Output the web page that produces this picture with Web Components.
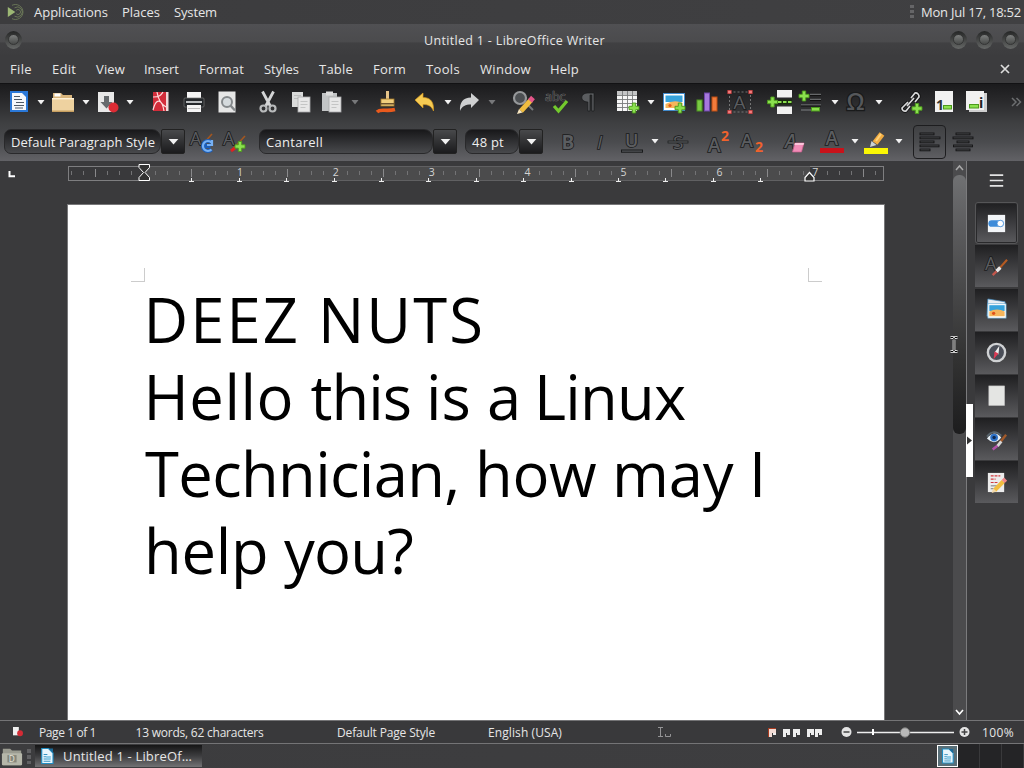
<!DOCTYPE html>
<html lang="en"><head><meta charset="utf-8"><title>Untitled 1 - LibreOffice Writer</title>
<style>
html,body{margin:0;height:100%;overflow:hidden;background:#3a3a3c}
body{font-family:"Open Sans","Noto Sans",sans-serif;color:#e6e6e6;font-size:13px}
</style></head><body>
<writer-desktop></writer-desktop>
<script>
const ln=(d,c,w=1,x='')=>`<path d="${d}" fill="none" stroke="${c}" stroke-width="${w}" ${x}/>`;
const fl=(d,c,x='')=>`<path d="${d}" fill="${c}" ${x}/>`;
const rc=(x,y,w,h,c,e='')=>`<rect x="${x}" y="${y}" width="${w}" height="${h}" fill="${c}" ${e}/>`;
const ci=(x,y,r,c,e='')=>`<circle cx="${x}" cy="${y}" r="${r}" fill="${c}" ${e}/>`;
const plus=(x,y)=>fl(`M${x-1.7} ${y-5}h3.4v3.3h3.3v3.4h-3.3v3.3h-3.4v-3.3h-3.3v-3.4h3.3z`,'#8be04e','stroke="#4c9a1c" stroke-width=".9"');
const tx=(x,y,s,t,c='#3c3d3f',e='')=>`<text x="${x}" y="${y}" font-size="${s}" fill="${c}" ${e}>${t}</text>`;
const OUT='stroke="#77797b" stroke-width=".7" paint-order="stroke"';
const OUTD='stroke="#191a1b" stroke-width="1.6" paint-order="stroke"';
const glyph=(x,y,s,t,e='')=>tx(x,y,s,t,'#5b5d60',OUTD+' '+e);
const ICONS={
 newdoc:rc(3,1,18,21,'#2a78d8')+rc(5,3,14,17,'#f4f7fb')+ln('M7 6.5h6M7 9.5h8M9 12.5h8M7 15.5h10M8 18h8','#4c5866',1.1)+fl('M15 3h4v4z','#2a78d8'),
 folder:fl('M2 3h8l2 2h9v5H2z','#d9b57c')+rc(3.5,3.5,6,3,'#fff')+rc(1,8,22,14,'#eed2a0','rx="1"')+rc(1,8,22,1.4,'#fff1d6')+rc(1,20.5,22,1.5,'#c79f60'),
 save:rc(2,2,16,20,'#e8e8e8')+fl('M8 6h5v6h3.500l-6 6.500-6-6.500H8z','#666a6d')+ci(17.5,17.5,5,'#dc2b34'),
 pdf:rc(4,2,15,19,'#d32d3a')+rc(17,2,2.500,19,'#f0d8d8')+ln('M4 7c7 0 8-2 10-5M4 20c3-12 9-12 11 1M8 2c1 7 4 12 9 15','#ffdede',1.200),
 print:rc(5,2,14,7,'#f5f5f5')+rc(2,8,20,9,'#24272a','rx="1" stroke="#777" stroke-width=".7"')+rc(4,11,16,2,'#b9bcbe')+rc(5,15,14,7,'#f4f4f4')+rc(6,18,12,1,'#bbb'),
 preview:rc(3.500,1.500,17,21,'#e6e6e6')+ci(12,12,5,'#d5dadd','stroke="#85898c" stroke-width="2"')+ln('M15.500 15.500l4.500 5','#85898c',2.500),
 cut:ln('M6.500 1.500l8 15M17.500 1.500l-8 15','#d4d5d6',2.800)+ci(7.500,18.500,3,'none','stroke="#b9bbbc" stroke-width="2.200"')+ci(16.500,18.500,3,'none','stroke="#b9bbbc" stroke-width="2.200"'),
 copy:rc(3,2,11,15,'#d9dada')+ln('M5 5.500h7M5 8.500h5','#bcbdbd')+rc(9,7,12,15,'#e7e7e7','stroke="#aaabac" stroke-width=".8"')+ln('M11.500 11.500h7M11.500 14.500h7M11.500 17.500h5','#c4c5c5'),
 paste:rc(2,3,15,18,'#c2c4c5')+rc(6,1.500,7,4,'#ddd')+rc(9,7,12,15,'#e7e7e7','stroke="#aaabac" stroke-width=".8"')+ln('M11.500 11.500h7M11.500 14.500h7M11.500 17.500h5','#c4c5c5'),
 brush:rc(11,1,3,9,'#e6c489')+rc(6,9,13,7,'#f1cf7d','stroke="#a87b28" stroke-width=".8"')+rc(6,13,13,1.500,'#6b522c')+ln('M2 22c4-4 8 0 18-2.500','#e95a1d',3.600),
 undo:fl('M2 10l8-7v4.500c8 0 11 5 10.500 13.500-2-5-5-6.500-10.500-6.500V18z','#f6cb53','stroke="#d69a20" stroke-width=".7"'),
 redo:fl('M22 10l-8-7v4.500c-8 0-11.500 5-11 13.500 2-5 5.500-6.500 11-6.500V18z','#cfd0d1'),
 find:ci(8,8,6,'#4c4f52','stroke="#96989a" stroke-width="2.200"')+ln('M14 13l7 7','#77797b',2)+ln('M9 21l10-11','#f1bd3f',5)+ln('M18 11l3-3.500','#e6568a',5)+fl('M5 24l2-5 3.500 3.500z','#f7e5c0'),
 abc:tx(0,11,12.5,'abc','#333',OUT)+ln('M9 16l4.500 5L22 11','#73c92d',3.200),
 pilcrow:fl('M17 3v18h-2.200V5h-1.800v16h-2.200v-9c-8 0-8-9 0-9z','#5b5d60','stroke="#191a1b" stroke-width=".7"'),
 table:rc(1,1,20,20,'#f7f7f7')+rc(1,1,20,4,'#c4c5c6')+ln('M6.500 1v20M11.500 1v20M16.500 1v20M1 5.500h20M1 9.500h20M1 13.500h20M1 17.500h20','#77797b',.9)+plus(18,18),
 image:rc(1.500,3.500,21,17,'#fff','stroke="#428acb"')+rc(3.500,5.500,17,6.500,'#36a3dc')+fl('M3.500 14q9-5 17-1v5h-17z','#f5b65c')+ci(8,15.500,1.600,'#e45a1b')+plus(18,18),
 chart:rc(2,10,5,11,'#79c943','stroke="#4f9522"')+rc(9.500,3,5,18,'#a678dc','stroke="#6e46a8"')+rc(17,7,5,14,'#f27c3c','stroke="#c04e12"'),
 textbox:glyph(5.500,19,19,'A')+rc(1.500,2,21,20,'none','stroke="#888" stroke-width=".8" stroke-dasharray="2 2"')+[1.500,22.500].map(x=>[2,22].map(y=>rc(x-1.700,y-1.700,3.400,3.400,'#f08080','stroke="#c33" stroke-width=".6"')).join('')).join(''),
 pagebreak:rc(8,0,15,7.500,'#f1f1f1')+rc(8,16.500,15,7.500,'#f1f1f1')+rc(6,9.500,17,5,'#1a2a10')+ln('M9 12h14','#8be04e',2,'stroke-dasharray="3.500 1.500"')+plus(3.500,12),
 field:plus(4,6)+ln('M10 4.500h11M10 9.500h11M1 15h20M1 20h10','#66686a',1.300)+ln('M10 5.500h11M10 10.500h11M1 16h20','#111',1)+rc(11.500,17.500,8,3.500,'#8be04e','stroke="#4c9a1c"'),
 omega:tx(2.500,20,23,'Ω','#55575a','stroke="#191a1b" stroke-width="2.4" paint-order="stroke" font-weight="600"'),
 link:ln('M9 12l-6 6a3 3 0 0 0 4 3l4-5M12 8l4-5a3.500 3.500 0 0 1 4 4l-4 5M8 16l7-8','#111',3.200)+ln('M9 12l-6 6a3 3 0 0 0 4 3l4-5M12 8l4-5a3.500 3.500 0 0 1 4 4l-4 5M8 16l7-8','#d9dadb',1.700)+plus(18,18.500),
 footnote:rc(3,1,18,21,'#f1f1f1')+tx(4,20,14,'1','#333','font-weight="bold"')+rc(11.500,15.500,8,3.500,'#8be04e','stroke="#4c9a1c"'),
 endnote:rc(5,3,18,19,'#cfcfcf')+rc(2,1,18,19,'#f1f1f1')+tx(15,18,14,'i','#222','font-weight="bold"')+rc(5.500,14.500,9,3.500,'#8be04e','stroke="#4c9a1c"'),
 more:ln('M8 8l4 4-4 4M12.500 8l4 4-4 4','#6c6e70',1.500),
 updstyle:glyph(-1,15,18,'A')+ln('M13 13l8-9','#a4571f',1.600)+ln('M20.500 12.500a5 5 0 1 0 0 7M13.500 16h6','#1d5eb8',4)+ln('M20.500 12.500a5 5 0 1 0 0 7M21 10v5h-5','#76b1f5',2.200),
 newstyle:glyph(-1,15,18,'A')+ln('M8 20l13-14','#a4571f',1.600)+ln('M7 21l4-3','#d22',3)+plus(16,16.500),
 bold:glyph(5.500,19,19,'B','font-weight="bold"'), italic:glyph(9,19,19,'I','font-style="italic"'),
 underline:glyph(5,17,18,'U','font-weight="600"')+rc(1.500,20,21,2.200,'#55575a','stroke="#191a1b"'),
 strike:glyph(7,19,19,'S')+rc(2,11,20,2,'#55575a','stroke="#191a1b" stroke-width=".7"'),
 sup:glyph(2,22,19,'A','font-weight="600"')+tx(15,11,14,'2','#f0622c','font-weight="bold"'),
 sub:glyph(1,17,18,'A','font-weight="600"')+tx(15,22,14,'2','#f0622c','font-weight="bold"'),
 clear:glyph(3,18,19,'A','font-style="italic" font-weight="600"')+fl('M13 13h9l-2.500 9h-9z','#f18db8','stroke="#cc5f8e" stroke-width=".7"')+fl('M13 13h9l-.5 2h-9z','#fbc5da'),
 color:glyph(5.500,15,19,'A','font-weight="600"')+rc(0,18,24,5,'#c9121a'),
 hilite:ln('M11 13l7-9','#f2ad42',6)+ln('M12 11l5-7','#ffd27a',2)+fl('M6 17l1.500-6 5 4z','#cbd2d4')+rc(0,18,24,6,'#fbf704'),
 left:[3,7,11,15,19].map((y,i)=>rc(2,y,[14,20,14,19,10][i],1.800,'#4a4b4d','stroke="#131314" stroke-width=".9"')).join(''),
 center:[3,7,11,15,19].map((y,i)=>{let w=[14,20,12,19,14][i];return rc(12-w/2,y,w,1.800,'#4a4b4d','stroke="#131314" stroke-width=".9"')}).join(''),
 menu:ln('M5 6.500h14M5 12h14M5 17.500h14','#e4e4e4',1.800),
 props:rc(3,3,18,18,'#f2f5f8')+rc(3.500,8.500,16,7,'#3d8bd9','rx="3.500"')+ci(16,12,3.400,'#fff','stroke="#3d8bd9" stroke-width=".8"'),
 styles:glyph(0,16,19,'A')+ln('M15 14l8-9','#b55a22',2.200)+ln('M12 17l4-4','#e9e9e9',3.500)+ln('M8 21l4-4','#c2574d',2.500),
 gallery:fl('M3 1l18 3-1 15H2z','#e8eef3','stroke="#3d8bc4" stroke-width=".7"')+rc(3,6,19,15,'#fff','stroke="#69a9cf" stroke-width=".7"')+rc(4.500,7.500,16,6,'#36a3dc')+fl('M4.500 14q8-4 16 0v5h-16z','#f5b65c')+ci(9,16,1.700,'#e1511b'),
 nav:ci(12,12,9,'#4a4e58','stroke="#cfd1d3" stroke-width="2.500"')+fl('M15 5l-1 9-4-2z','#eee')+fl('M9 19l1-8 4 2z','#df3a55'),
 page:rc(4,2,16.500,20.500,'#e4e5e3','stroke="#b9b9b9" stroke-width=".6"'),
 inspect:fl('M2 11q8-10 15-1-7 9-15 1z','#e6eef4')+ln('M2 9q7-9 15-1','#59656d',1.800)+ci(9.500,10,4,'#2d72c8')+ci(9.500,10,1.800,'#102a50')+ln('M15 16l7-9','#a35a2a',2.500)+ln('M13 19l4-5','#d7d7d7',3)+ln('M8 22.500l5-4','#b052a8',2.700),
 changes:rc(3,2,17,20,'#ececec')+ln('M6 5h10M6 8.500h5M6 12h8','#d2393d',1.300,'stroke-dasharray="3 1"')+ln('M6 15.500h8M6 18.500h5','#777',1)+ln('M10 20l9-9','#f1bd3f',4.500)+ln('M19 11l2.500-2.500','#f18787',4.500)+fl('M7 23l1.500-5 3.500 3.500z','#f3d9a8'),
 modified:rc(6,6,7,10,'#eee')+ci(14.500,13.500,3.500,'#d32b35'),
 files:fl('M2 4h8l2 2h10v16H2z','#9a9b90')+rc(1,9,22,13,'#b5b6a9','rx="1"')+rc(7,11,10,8,'#85867b')+tx(8.500,19,9,'D','#e5e6dc'),
 writer:fl('M5 2h9l6 6v14H5z','#eaf6fc','stroke="#218fc4" stroke-width="1.500"')+fl('M14 2h6v6z','#1b6a98')+ln('M7.500 10h5M7.500 13h9M7.500 16h9M7.500 19h9','#2288bb',1.200)+rc(11,12,6,5,'#8fcbe6'),
 mate:fl('M1 6l9 6-9 6z','#9cb774')+ln('M6 4a9 9 0 1 1 0 16M9 7a6 6 0 1 1 0 10M11 10a3 3 0 1 1 0 4','#717f5b',1)
};
const put=(tag,css,html,after)=>customElements.define(tag,class extends HTMLElement{
 connectedCallback(){if(this.shadowRoot)return;const r=this.attachShadow({mode:'open'});
  const t=document.createElement('template');
  t.innerHTML=`<style>*{box-sizing:border-box}${css}</style>`+(typeof html==='function'?html(this):html);
  r.append(t.content.cloneNode(true));after&&after(this,r);}
});
// A run of text tracked to an exact width.
put('fit-text',':host{display:block;flex:none;white-space:pre}span{display:inline-block}','<span><slot></slot></span>',(h,r)=>{
 const w=+h.getAttribute('w'),s=r.querySelector('span'),t=h.textContent;h.style.width=w+'px';
 s.style.letterSpacing=((w-s.getBoundingClientRect().width)/t.length)+'px';});
put('ui-icon',':host{display:block;flex:none;width:24px;height:24px}svg{display:block;width:100%;height:100%;overflow:visible}',
 h=>`<svg viewBox="0 0 24 24">${ICONS[h.getAttribute('name')]}</svg>`);
put('drop-arrow',':host{display:block;flex:none;width:8px;height:5px;color:#f2f2f2}:host([dim]){color:#77787a}:host([big]){width:11px;height:6px}svg{display:block;width:100%;height:100%}',
 '<svg viewBox="0 0 8 5" preserveAspectRatio="none"><path d="M.5 0h7L4 4.500z" fill="currentColor"/></svg>');
put('title-orb',':host{display:block;flex:none;width:17px;height:18px;border-radius:50%;background:linear-gradient(#242525,#666867);padding:3px}i{display:block;width:11px;height:11px;border-radius:50%;background:linear-gradient(#7c7e7d,#484a49);border:1px solid #343535}','<i></i>');
put('combo-box',`:host{display:flex;flex:none;height:25px;align-items:stretch}
 .e{flex:1;background:linear-gradient(#18181a,#48494c);border-radius:7px 9px 9px 7px;border:1px solid #29292b;padding-left:6px;display:flex;align-items:center;font-size:13px;min-width:0;color:#eee}
 .b{width:24px;background:linear-gradient(#48494b,#1b1b1d);border:1px solid #222;border-radius:2px;display:flex;align-items:center;justify-content:center}`,
 '<div class="e"><slot></slot></div><div class="b"><drop-arrow big></drop-arrow></div>');
// Row of tools; each entry is [centre, kind, name] and becomes a flex item with a leading margin.
const row=(items)=>{let p=0;return items.map(([c,k,n,w,t,tw])=>{const W=k==='i'?24:k==='a'||k==='d'?8:k==='s'?33:w,x=k==='c'?c:c-W/2,m=x-p;p=x+W;const s=`style="margin-left:${m}px${k==='c'?`;width:${w}px`:''}"`;
 return k==='i'?`<ui-icon name="${n}" ${s}></ui-icon>`:k==='a'?`<drop-arrow ${s}></drop-arrow>`:k==='d'?`<drop-arrow dim ${s}></drop-arrow>`:k==='s'?`<span class="sel" ${s}><ui-icon name="${n}"></ui-icon></span>`:`<combo-box ${s}><fit-text w="${tw}">${t}</fit-text></combo-box>`}).join('')};
put('tool-bars',`:host{display:block;flex:none;height:78px;background:linear-gradient(#1b1b1d,#28282a 20%,#3e3f41 50%,#4a4b4e 75%,#626266);border-top:1px solid #121214}
 .r{height:36px;display:flex;align-items:center}.r+.r{height:40px;padding-top:3px}.sel{display:flex;flex:none;width:33px;height:34px;border:1px solid #1d1d1f;border-radius:4px;align-items:center;justify-content:center}`,
 ()=>`<div class="r">${row([[19,'i','newdoc'],[41,'a'],[63,'i','folder'],[85.500,'a'],[108,'i','save'],[129.500,'a'],[160.500,'i','pdf'],[194,'i','print'],[227,'i','preview'],[268,'i','cut'],[301,'i','copy'],[332,'i','paste'],[354.500,'d'],[387,'i','brush'],[425,'i','undo'],[447.500,'a'],[469,'i','redo'],[491.500,'d'],[524,'i','find'],[557,'i','abc'],[589,'i','pilcrow'],[628,'i','table'],[650.500,'a'],[674,'i','image'],[707,'i','chart'],[740,'i','textbox'],[781,'i','pagebreak'],[812,'i','field'],[834.500,'a'],[856,'i','omega'],[878.500,'a'],[910.500,'i','link'],[943.500,'i','footnote'],[976,'i','endnote'],[1016,'i','more']])}</div>
 <div class="r">${row([[4,'c','',181,'Default Paragraph Style',144],[203,'i','updstyle'],[236,'i','newstyle'],[259,'c','',198,'Cantarell',57],[465,'c','',78,'48 pt',32],[568,'i','bold'],[600,'i','italic'],[632,'i','underline'],[654.500,'a'],[678,'i','strike'],[718,'i','sup'],[752,'i','sub'],[794,'i','clear'],[832,'i','color'],[854.500,'a'],[876,'i','hilite'],[898.500,'a'],[929.500,'s','left'],[963,'i','center']])}</div>`);
put('text-ruler',':host{display:block;flex:none;height:22px;width:952px}svg{display:block}',()=>{
 let s=rc(68.500,5.500,815,14,'#39393b','stroke="#7e7e80"')+rc(144,5,666,15,'#4b4b4c')+ln('M144 5.500h666M144 19.500h666','#606062');
 for(let i=-6;i<=61;i++){const x=Math.round(144+i*12)-.5;if(i===0||(i>0&&i%8===0)||x>880)continue;const h=i%4===0;s+=ln(`M${x} ${h?8:10}v${h?8:4}`,h?'#89898b':'#737375')}
 for(let n=1;n<8;n++)s+=`<text x="${144+n*95.900}" y="15" font-size="10.5" text-anchor="middle" fill="#d3d3d3">${n}</text>`;
 for(let i=1;i<14;i++){const x=Math.round(144+i*47.400)+.5;s+=ln(`M${x} 17v4M${x-2.500} 20.500h5`,'#eee')}
 s+=fl('M139 3.500h10.500v3l-4.500 5 4.500 5v3H139v-3l4.500-5-4.500-5z','#333','stroke="#fff"');
 s+=fl('M805 20v-3.500l4.500-5 4.500 5V20z','#333','stroke="#fff" stroke-width="1.200"')+ln('M9.500 10v5.200h5.500','#fff',2);
 return `<svg width="952" height="22">${s}</svg>`});
// Words of one document line: [text, advance] pairs, each advance including the space after it.
const line=(ml,...ws)=>`<div class="l" style="margin-left:${ml}px">${ws.map(([t,w])=>`<fit-text w="${w}">${t}</fit-text>`).join('')}</div>`;
put('text-page',`:host{display:block;width:818px;height:517px;margin:21px 0 0 67px;border:1px solid #777779;border-bottom:0;background:#fff;color:#000}
 .m{display:flex;justify-content:space-between;padding:63px 62px 0 63px;height:76px}.m i{width:14px;height:14px;border:solid #ccc;border-width:0 1px 1px 0}.m i+i{border-width:0 0 1px 1px}
 .t{padding-left:76px;font-size:61.500px;line-height:77.100px}.l{display:flex}`,
 `<div class="m"><i></i><i></i></div><div class="t">${line(-.5,['DEEZ ',174.5],['NUTS',167])}${line(-.5,['Hello ',167],['this ',115.5],['is ',61],['a ',47],['Linux',151.500])}${line(1,['Technician, ',330],['how ',137],['may ',137],['I',19])}${line(0,['help ',140],['you?',129])}</div>`);
put('scroll-bar',`:host{display:flex;flex-direction:column;flex:none;width:14px;background:#4b4b4d;border-right:1px solid #7b7b7d;align-items:center}
 svg{flex:none}.th{width:13px;height:259px;border-radius:6px;background:linear-gradient(#707173,#5c5c5e 20%,#333 70%,#1d1d1e)}.sp{flex:1}`,
 `<svg width="13" height="14">${ln('M3 9l3.500-4L10 9','#aaa',1.500)}</svg><div class="th"></div><div class="sp"></div><svg width="13" height="16">${ln('M3 6l3.500 4L10 6','#fff',1.600)}</svg>`);
put('side-deck',`:host{display:flex;flex-direction:column;flex:1;padding:8px 6px 0 8px;gap:1.200px;background:#3a3a3c}
 .h{height:32px;display:flex;justify-content:center;flex:none}.b{height:42px;flex:none;background:linear-gradient(#1f1f21,#5a5a5d);display:flex;align-items:center;justify-content:center}.on{border:1px solid #555557;border-radius:3px;box-shadow:inset 0 0 0 1px #29292b}ui-icon{width:23px;height:23px}`,
 `<div class="h"><ui-icon name="menu"></ui-icon></div>`+['props','styles','gallery','nav','page','inspect','changes'].map((n,i)=>`<div class="b ${i?'':'on'}"><ui-icon name="${n}"></ui-icon></div>`).join(''));
const words=(a)=>{let p=0;return a.map(([x,w,t])=>{const m=x-p;p=x+w;return `<fit-text w="${w}" style="margin-left:${m}px">${t}</fit-text>`}).join('')};
put('top-panel',':host{display:flex;flex:none;height:24px;align-items:center;background:linear-gradient(90deg,#3c3c3e,#404042);padding-right:3px}ui-icon{width:20px;height:20px;margin-left:7px;margin-right:-27px}.g{flex:1}.d{width:4px;height:14px;margin-right:7px;background:repeating-linear-gradient(#656567 0 3px,transparent 3px 5px)}',
 `<ui-icon name="mate"></ui-icon>${words([[34,74,'Applications'],[122,38,'Places'],[174,43,'System']])}<div class="g"></div><div class="d"></div><fit-text w="100">Mon Jul 17, 18:52</fit-text>`);
put('title-bar',':host{display:flex;flex:none;height:32px;align-items:center;padding:0 5px;background:linear-gradient(#505053,#4b4b4d 55%,#404042 60%,#3c3c3e)}.c{flex:1;display:flex;justify-content:center;padding-left:57px}.b{display:flex;gap:9px}fit-text{font-size:12.500px;font-weight:500}',
 '<title-orb></title-orb><div class="c"><fit-text w="181">Untitled 1 - LibreOffice Writer</fit-text></div><div class="b"><title-orb></title-orb><title-orb></title-orb><title-orb></title-orb></div>');
put('menu-bar',':host{display:flex;flex:none;height:27px;align-items:center;background:#3c3c3e;padding-bottom:2px}svg{margin-left:421px}',
 `${words([[10,22,'File'],[52,24,'Edit'],[96,29,'View'],[144,35,'Insert'],[199,45,'Format'],[264,35,'Styles'],[319,34,'Table'],[373,33,'Form'],[426,34,'Tools'],[480,51,'Window'],[550,29,'Help']])}<svg width="10" height="10">${ln('M1 1l8 8M9 1l-8 8','#ddd',1.700)}</svg>`);
put('status-bar',':host{display:flex;flex:none;height:24px;align-items:center;background:#39393b;border-top:1px solid #747476;border-bottom:1px solid #747476;font-size:12px}ui-icon{width:20px;height:20px;margin-left:8px;margin-right:-28px}svg{margin-left:94px}',
 ()=>{const pg=(x,c='#eee')=>rc(x,8,7,8,c)+rc(x+3,12,4,4,'#39393b')+rc(x+4,12,3,2,'#eee');
 return `<ui-icon name="modified"></ui-icon>${words([[39,57,'Page 1 of 1'],[135.5,128,'13 words, 62 characters'],[337,98,'Default Page Style'],[488,74,'English (USA)']])}<svg width="322" height="22">${ln('M2 6.500h5M4.500 6v9M2 15.500h5M9.500 13v2.500h5V13','#949496',1)}${rc(112,7,8,9,'#a93c20')}${pg(113,'#f3dcd5')}${pg(127)}${pg(137)}${pg(151)}${pg(159)}${ci(190.500,11,5,'#e4e4e4')}${ln('M187.500 11h6','#444',1.500)}${ln('M201 11.500h97','#eee',1.600)}${rc(216,8,2,6,'#fff')}${ci(249,11.500,4.700,'#b9b9b9','stroke="#777"')}${ci(308.500,11,5,'#e4e4e4')}${ln('M305.500 11h6M308.500 8v6','#444',1.500)}</svg><fit-text w="32" style="margin-left:4px">100%</fit-text>`});
put('task-bar',`:host{display:flex;flex:1;background:linear-gradient(90deg,#3c3c3e,#3e3e40)}.f{width:22px;height:22px;margin:1px 0 0 1px}.g{width:4px;height:15px;margin:5px 4px 0 4px;background:repeating-linear-gradient(#606062 0 4px,transparent 4px 6px)}
 .t{width:167px;height:22px;margin-top:1px;background:linear-gradient(#151516,#3d3d3f 50%,#727274);display:flex;align-items:center;padding-left:3px;gap:7px}.t ui-icon{width:18px;height:18px}.s{flex:1}
 .w{width:21px;height:22px;border:1px solid #fff;background:#596f78;margin-top:1px;padding:1px}.w ui-icon{width:17px;height:18px}.x{width:22px;background:#242426;border-right:1px solid #39393b}`,
 `<ui-icon class="f" name="files"></ui-icon><div class="g"></div><div class="t"><ui-icon name="writer"></ui-icon><fit-text w="129">Untitled 1 - LibreOf…</fit-text></div><div class="s"></div><div class="w"><ui-icon name="writer"></ui-icon></div><div class="x"></div><div class="x"></div><div class="x"></div>`);
put('writer-desktop',`:host{display:flex;flex-direction:column;position:relative;width:1024px;height:768px;overflow:hidden}
 main{height:559px;flex:none;display:flex;background:#3a3a3c;overflow:hidden}.ed{width:953px;flex:none}
 .split,.cur{position:absolute}.split{left:966px;top:404px;width:7px;height:73px;background:#fff}.cur{left:949px;top:336px}`,
 `<top-panel></top-panel><title-bar></title-bar><menu-bar></menu-bar><tool-bars></tool-bars>
 <main><div class="ed"><text-ruler></text-ruler><text-page></text-page></div><scroll-bar></scroll-bar><side-deck></side-deck></main>
 <status-bar></status-bar><task-bar></task-bar>
 <svg class="split" viewBox="0 0 7 73">${fl('M1 32.500l5 4-5 4z','#333')}</svg><svg class="cur" width="10" height="17">${ln('M1.500 1.500h2.500l1 1 1-1h2.500M5 2v13M1.500 15.500h2.500l1-1 1 1h2.500','#fff',2.600)}${ln('M1.500 1.500h2.500l1 1 1-1h2.500M5 2v13M1.500 15.500h2.500l1-1 1 1h2.500','#000',1)}</svg>`);
</script></body></html>
